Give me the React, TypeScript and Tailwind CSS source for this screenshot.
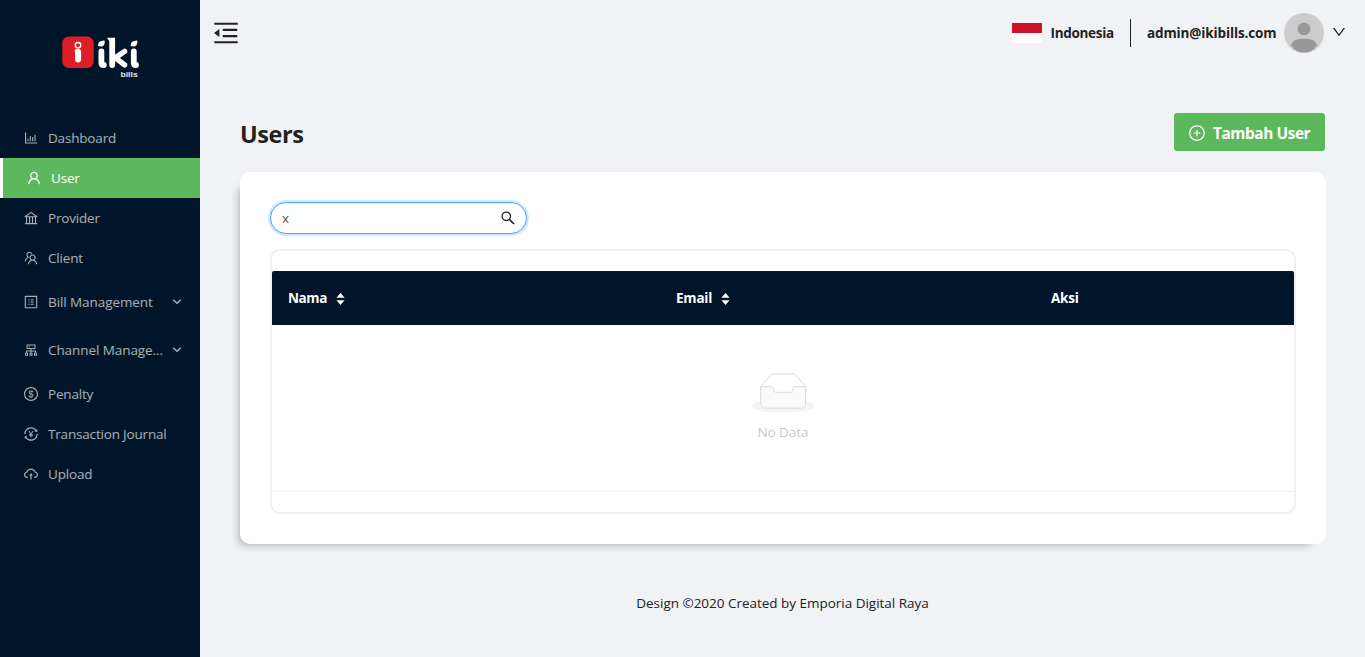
import React from "react";
import {
  AiOutlineBarChart,
  AiOutlineUser,
  AiOutlineBank,
  AiOutlineTeam,
  AiOutlineProfile,
  AiOutlineCluster,
  AiOutlineDollarCircle,
  AiOutlineTransaction,
  AiOutlineCloudUpload,
  AiOutlineMenuFold,
  AiOutlinePlusCircle,
  AiOutlineDown,
} from "react-icons/ai";
import type { IconType } from "react-icons";

type Item = { label: string; icon: IconType; active?: boolean; sub?: boolean };

const items: Item[] = [
  { label: "Dashboard", icon: AiOutlineBarChart },
  { label: "User", icon: AiOutlineUser, active: true },
  { label: "Provider", icon: AiOutlineBank },
  { label: "Client", icon: AiOutlineTeam },
  { label: "Bill Management", icon: AiOutlineProfile, sub: true },
  { label: "Channel Manage...", icon: AiOutlineCluster, sub: true },
  { label: "Penalty", icon: AiOutlineDollarCircle },
  { label: "Transaction Journal", icon: AiOutlineTransaction },
  { label: "Upload", icon: AiOutlineCloudUpload },
];

function Logo() {
  return (
    <svg className="ml-[60px] mt-[34px] block h-[46px] w-[82px]" viewBox="60 34 82 46">
      <rect x="62.3" y="36.5" width="31.4" height="31.5" rx="6.5" fill="#dc1f26" />
      <circle cx="78" cy="45.2" r="2.7" fill="none" stroke="#fff" strokeWidth="1.4" />
      <path d="M74.8 49.4h3.6v3h-3.6z" fill="#fff" />
      <path d="M78.1 52v7.6" fill="none" stroke="#fff" strokeWidth="6" strokeLinecap="round" />
      <g fill="none" stroke="#fff" strokeWidth="5.8" strokeLinecap="round" strokeLinejoin="round">
        <path d="M101.4 51.4v11q0 2.6 2.4 2.6" />
        <path d="M112.2 41.5v23.5" />
        <path d="M124.6 51.4l-9.2 6.4 9.2 7" strokeWidth="5.4" />
        <path d="M133.8 51.4v11q0 2.6 2.2 2.6" />
      </g>
      <path d="M107 37.8h8v5h-4.6z" fill="#fff" />
      <path
        d="M98.8 45.4q.2-3.8 5.2-4-.2 4.2-2.6 4.2zM131.4 45.4q.2-3.8 5.2-4-.2 4.2-2.6 4.2z"
        fill="#fff"
        stroke="#fff"
        strokeWidth="1.6"
        strokeLinejoin="round"
      />
      <text x="120.4" y="77" fill="#e5e8ea" fontSize="7.8" fontWeight="700" fontFamily="Liberation Sans, sans-serif" textLength="17.4" lengthAdjust="spacingAndGlyphs">
        bills
      </text>
    </svg>
  );
}

function Chevron() {
  return (
    <svg className="h-[8px] w-[10px]" viewBox="0 0 10 8">
      <path d="M1.2 1.7 5 5.3l3.8-3.6" fill="none" stroke="currentColor" strokeWidth="1.5" />
    </svg>
  );
}

function Sorter() {
  return (
    <svg className="relative top-px h-[12px] w-[9px]" viewBox="0 0 9 12">
      <path d="M4.5 0 8.6 4.8H.4zM4.5 12 8.6 7.2H.4z" fill="#fff" />
    </svg>
  );
}

function Sidebar() {
  return (
    <aside className="flex h-full w-[200px] shrink-0 flex-col bg-[#001529]">
      <Logo />
      <nav className="mt-[38px] flex flex-col">
        {items.map(({ label, icon: Icon, active, sub }) => (
          <a
            key={label}
            className={
              "flex items-center pl-[23px] " +
              (sub ? "h-[48px] tracking-[-0.08px] " : "h-[40px] tracking-[-0.18px] ") +
              (active ? "border-l-[3px] border-white bg-[#5cb85c] text-white" : "text-white/65")
            }
          >
            <Icon className="size-[16px] shrink-0" />
            <span className="ml-[9px] whitespace-nowrap">{label}</span>
            {sub && (
              <span className="ml-auto mr-[18px] flex">
                <Chevron />
              </span>
            )}
          </a>
        ))}
      </nav>
    </aside>
  );
}

function Header() {
  return (
    <header className="flex h-[66px] shrink-0 items-center pl-[10.5px] pr-[18px]">
      <AiOutlineMenuFold className="mb-px size-[30px]" />
      <div className="ml-auto flex items-center font-bold">
        <div className="flex h-[20px] w-[30px] flex-col bg-white">
          <div className="h-[10px] bg-[#ce1126]" />
        </div>
        <span className="ml-[8.5px] w-[63.5px] whitespace-nowrap tracking-[-0.3px]">Indonesia</span>
        <div className="ml-[16px] h-[28px] w-px bg-[#222]" />
        <span className="ml-[16px] w-[129px] whitespace-nowrap tracking-[-0.13px]">admin@ikibills.com</span>
        <svg className="ml-[8px] size-[40px]" viewBox="0 0 40 40">
          <circle cx="20" cy="20" r="20" fill="#ccc" />
          <circle cx="20" cy="16" r="6.3" fill="#999" />
          <path d="M7 32.5Q8 25.6 20 25.6t13 6.9Q28 39.6 20 39.6T7 32.5z" fill="#999" />
        </svg>
        <AiOutlineDown className="mb-[2px] ml-[7px] size-[16px]" />
      </div>
    </header>
  );
}

function Empty() {
  return (
    <div className="flex h-[166px] flex-col items-center pt-[48px] text-black/25">
      <svg className="h-[40px] w-[62.4px]" viewBox="0 0 64 41">
        <g transform="translate(0 1)" fill="none" fillRule="evenodd">
          <ellipse fill="#F5F5F5" cx="32" cy="33" rx="32" ry="7" />
          <g fillRule="nonzero" stroke="#D9D9D9">
            <path d="M55 12.76L44.854 1.258C44.367.474 43.656 0 42.907 0H21.093c-.749 0-1.46.474-1.947 1.257L9 12.761V22h46v-9.24z" />
            <path
              d="M41.613 15.931c0-1.605.994-2.93 2.227-2.931H55v18.137C55 33.26 53.68 35 52.05 35h-40.1C10.32 35 9 33.259 9 31.137V13h11.16c1.233 0 2.227 1.323 2.227 2.928v.022c0 1.605 1.005 2.901 2.237 2.901h14.752c1.232 0 2.237-1.308 2.237-2.913v-.007z"
              fill="#FAFAFA"
            />
          </g>
        </g>
      </svg>
      <span className="mt-[8px] leading-[22px] tracking-[-0.05px]">No Data</span>
    </div>
  );
}

function UsersTable() {
  return (
    <div className="mt-[15px] rounded-[10px] border-2 border-[#f0f0f0] py-[20px]">
      <div className="flex h-[54px] items-center rounded-t-[2px] bg-[#001529] pl-[16px] font-bold text-white">
        <div className="flex w-[388px] items-center">
          <span className="w-[48px] tracking-[-0.4px]">Nama</span>
          <Sorter />
        </div>
        <div className="flex w-[375px] items-center">
          <span className="w-[45px] tracking-[-0.2px]">Email</span>
          <Sorter />
        </div>
        <span className="tracking-[-0.25px]">Aksi</span>
      </div>
      <Empty />
      <div className="h-px bg-[#f0f0f0]" />
    </div>
  );
}

export default function App() {
  return (
    <div className="flex h-[657px] w-[1365px] overflow-hidden bg-[#f0f2f5] font-['Open_Sans','Noto_Sans',sans-serif] text-[13.5px] text-[#222]">
      <Sidebar />
      <div className="flex min-w-0 flex-1 flex-col">
        <Header />
        <main className="flex flex-col pl-[40px] pr-[39px] pt-[46px]">
          <div className="flex h-[40px] items-center justify-between">
            <h1 className="mt-[6px] text-[23.4px] font-bold tracking-[-0.35px]">Users</h1>
            <button className="mr-px flex h-[38px] w-[151px] items-center rounded-[3px] bg-[#5cb85c] pl-[14px] text-[15.4px] font-bold text-white">
              <AiOutlinePlusCircle className="mt-px size-[18px]" />
              <span className="ml-[7px] mt-[3px] whitespace-nowrap tracking-[-0.43px]">Tambah User</span>
            </button>
          </div>
          <section className="mt-[20px] h-[372px] rounded-[10px] bg-white px-[30px] pt-[30px] shadow-[-8px_8px_10px_-8px_rgba(0,0,0,0.35)]">
            <div className="flex h-[32px] w-[257px] items-center justify-between rounded-full border border-[#40a9ff] bg-white pl-[11px] pr-[11px] shadow-[0_0_0_2px_rgba(24,144,255,0.2)]">
              <span className="text-[#555]">x</span>
              <svg className="size-[14px]" viewBox="0 0 14 14" fill="none" stroke="#222">
                <circle cx="5.3" cy="5.3" r="4.2" strokeWidth="1.3" />
                <path d="M8.4 8.4l4.6 4.6" strokeWidth="1.6" />
              </svg>
            </div>
            <UsersTable />
          </section>
        </main>
        <footer className="mt-[48px] text-center leading-[22px]">
          <span className="tracking-[-0.02px]">Design ©2020 Created by Emporia Digital Raya</span>
        </footer>
      </div>
    </div>
  );
}
